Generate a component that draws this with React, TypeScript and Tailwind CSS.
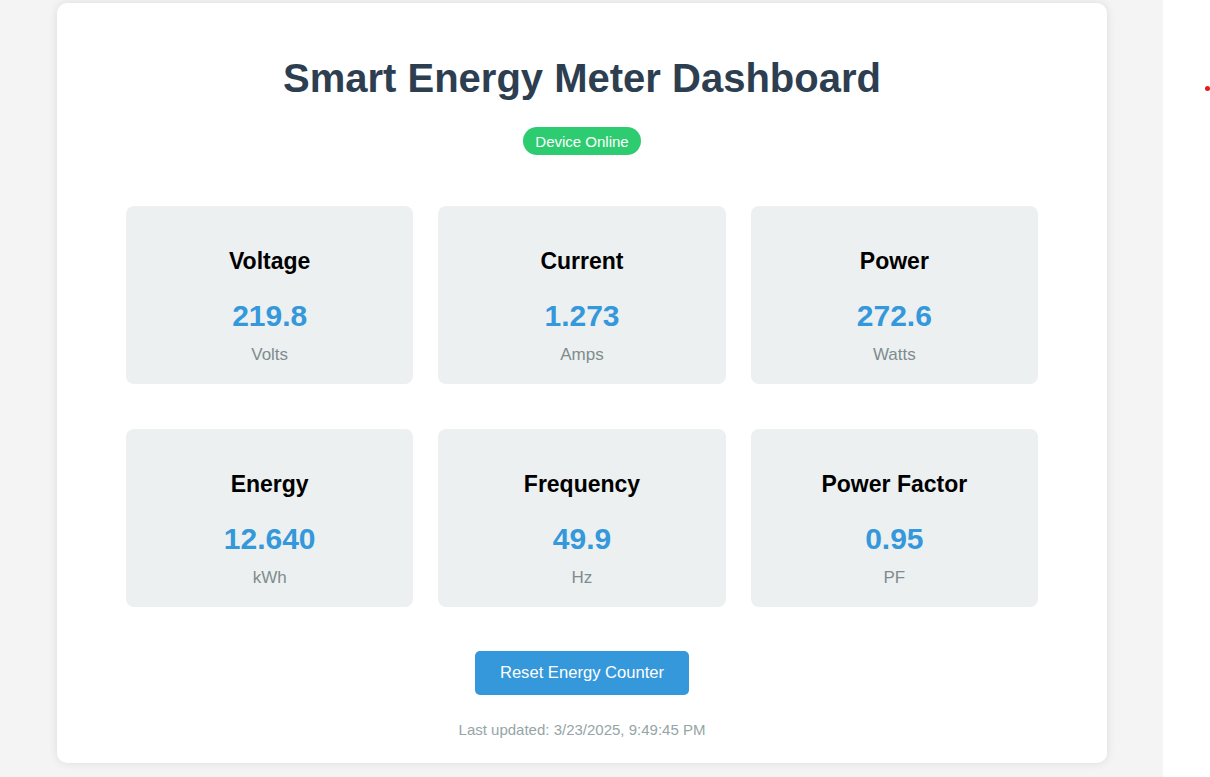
import React from 'react';

interface Reading {
  label: string;
  value: string;
  unit: string;
}

const readings: Reading[] = [
  { label: 'Voltage', value: '219.8', unit: 'Volts' },
  { label: 'Current', value: '1.273', unit: 'Amps' },
  { label: 'Power', value: '272.6', unit: 'Watts' },
  { label: 'Energy', value: '12.640', unit: 'kWh' },
  { label: 'Frequency', value: '49.9', unit: 'Hz' },
  { label: 'Power Factor', value: '0.95', unit: 'PF' },
];

function ReadingCard({ label, value, unit }: Reading) {
  return (
    <div className="flex h-[178px] flex-col items-center rounded-lg bg-[#ecf0f1] pt-[42px]">
      <h3 className="text-[23px] font-bold leading-[26px] text-black">{label}</h3>
      <div className="mt-[25px] text-[30px] font-bold leading-[34px] text-[#3498db]">{value}</div>
      <div className="mt-[12px] text-[17px] leading-[20px] text-[#7f8c8d]">{unit}</div>
    </div>
  );
}

export default function App() {
  return (
    <div className="flex h-[777px] w-full overflow-hidden font-['Liberation_Sans',Arial,sans-serif]">
      <div className="w-[1163px] shrink-0 bg-[#f4f4f4] px-[57px] pt-[3px]">
        <div className="h-[760px] w-[1050px] rounded-[10px] bg-white pt-[52px] shadow-[0_0_10px_rgba(0,0,0,0.1)]">
          <h1 className="text-center text-[40px] font-bold leading-[46px] text-[#2c3e50]">
            Smart Energy Meter Dashboard
          </h1>
          <div className="mt-[26px] flex justify-center">
            <span className="h-[28px] rounded-full bg-[#2ecc71] px-[12.5px] pt-[1px] text-[15px] leading-[27px] text-white">
              Device Online
            </span>
          </div>

          <div className="mx-[69px] mt-[51px] grid grid-cols-3 gap-x-[25px] gap-y-[45px]">
            {readings.map((r) => (
              <ReadingCard key={r.label} {...r} />
            ))}
          </div>

          <div className="mt-[44px] flex justify-center">
            <button className="h-[44px] rounded-[5px] bg-[#3498db] px-[25px] pt-[1px] text-[16.6px] text-white">
              Reset Energy Counter
            </button>
          </div>

          <p className="mt-[26px] text-center text-[15px] leading-[18px] text-[#95a5a6]">
            Last updated: 3/23/2025, 9:49:45 PM
          </p>
        </div>
      </div>
      <div className="relative flex-1 bg-white">
        <span className="absolute left-[42px] top-[86px] h-[5px] w-[5px] rounded-full bg-[#e51b1b]" />
      </div>
    </div>
  );
}
